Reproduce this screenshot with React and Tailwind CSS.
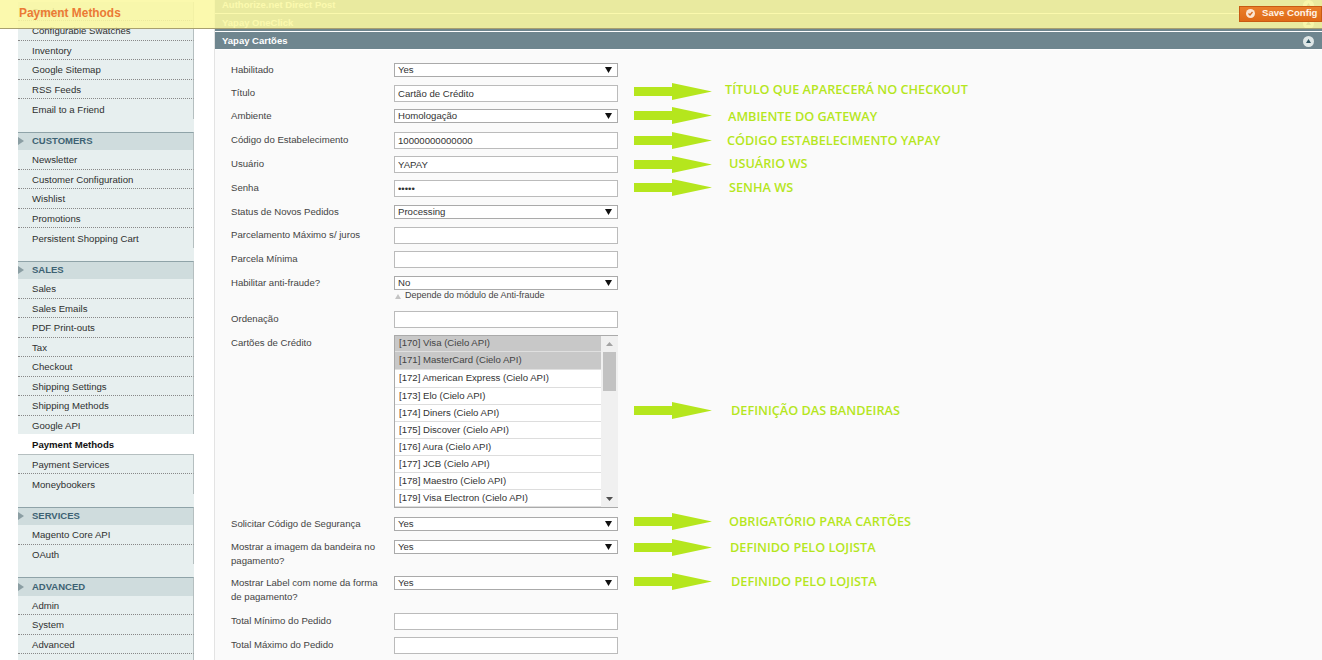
const groups = [
  { title: null, items: ['Catalog', 'Configurable Swatches', 'Inventory', 'Google Sitemap', 'RSS Feeds', 'Email to a Friend'] },
  { title: 'CUSTOMERS', items: ['Newsletter', 'Customer Configuration', 'Wishlist', 'Promotions', 'Persistent Shopping Cart'] },
  { title: 'SALES', items: ['Sales', 'Sales Emails', 'PDF Print-outs', 'Tax', 'Checkout', 'Shipping Settings', 'Shipping Methods', 'Google API', 'Payment Methods', 'Payment Services', 'Moneybookers'] },
  { title: 'SERVICES', items: ['Magento Core API', 'OAuth'] },
  { title: 'ADVANCED', items: ['Admin', 'System', 'Advanced', ''] },
]

const cards = [
  '[170] Visa (Cielo API)',
  '[171] MasterCard (Cielo API)',
  '[172] American Express (Cielo API)',
  '[173] Elo (Cielo API)',
  '[174] Diners (Cielo API)',
  '[175] Discover (Cielo API)',
  '[176] Aura (Cielo API)',
  '[177] JCB (Cielo API)',
  '[178] Maestro (Cielo API)',
  '[179] Visa Electron (Cielo API)',
]

function Arrow() {
  return (
    <svg width="78" height="17" viewBox="0 0 78 17" className="shrink-0">
      <polygon points="0,4 38,4 38,0 78,8.5 38,17 38,13 0,13" fill="#b5e61d" />
    </svg>
  )
}

// Lime arrow + caption painted on top of the screenshot, next to the field
function Note({ text, className, textClass }) {
  return (
    <div className={`ml-[16px] flex h-[24px] items-center ${className}`}>
      <Arrow />
      <span className={`whitespace-nowrap pt-[2px] font-['Open_Sans',sans-serif] text-[12.7px] font-semibold text-[#b5e61d] ${textClass}`}>
        {text}
      </span>
    </div>
  )
}

function SelectBox({ value }) {
  return (
    <div className="flex h-[24px] w-[224px] items-center">
      <div className="flex h-[14px] w-full items-center justify-between border border-[#aaaaaa] bg-white pl-[3px] pr-[5px] text-[#333]">
        <span>{value}</span>
        <svg width="7" height="6" viewBox="0 0 7 6"><polygon points="0,0 7,0 3.5,6" fill="#111" /></svg>
      </div>
    </div>
  )
}

function TextBox({ value = '', type = 'text' }) {
  return (
    <div className="flex h-[24px] w-[224px] items-center">
      <input
        readOnly
        type={type}
        value={value}
        className="h-[17px] w-full border border-[#bbbbbb] bg-white px-[3px] text-[9.6px] text-[#333] outline-none"
      />
    </div>
  )
}

function Row({ label, className, children, note }) {
  return (
    <div className={`flex items-start ${className}`}>
      <div className="w-[163px] shrink-0 pt-[5px] pr-[8px] leading-[14px] text-[#444]">{label}</div>
      <div className="w-[224px] shrink-0">{children}</div>
      {note}
    </div>
  )
}

function Sidebar() {
  return (
    <aside className="w-[214px] shrink-0 pl-[18px] pr-[20px] pt-[1.5px]">
      <div className="bg-[#e7efef]">
        {groups.map((group, g) => (
          <div key={g} className={g === 4 ? '' : 'pb-[13px]'}>
            {group.title && (
              <div className="flex h-[18.5px] items-center border-t border-[#8fa3a8] border-r border-r-[#b5bfc0] bg-[#cfdcdd]">
                <svg width="6" height="8" viewBox="0 0 6 8" className="shrink-0"><polygon points="0,0 6,4 0,8" fill="#8b9ea3" /></svg>
                <span className="ml-[8px] text-[9.5px] font-bold text-[#3d6273]">{group.title}</span>
              </div>
            )}
            {group.items.map((item, i) => {
              const active = item === 'Payment Methods'
              const last = i === group.items.length - 1
              if (active) {
                return (
                  <div key={item} className="-mt-px flex h-[20.5px] items-center border-b border-[#b5bfc0] bg-white pl-[14px] pt-[2px] font-bold text-[#111]">
                    {item}
                  </div>
                )
              }
              return (
                <div
                  key={i}
                  className={`flex h-[19.5px] items-center border-r border-r-[#b5bfc0] pl-[14px] pt-[2px] text-[#2f2f2f] ${last ? '' : 'border-b border-b-[#888] [border-bottom-style:dotted]'}`}
                >
                  {item}
                </div>
              )
            })}
          </div>
        ))}
      </div>
    </aside>
  )
}

function SectionBar({ title, className }) {
  return (
    <div className={`flex h-[18px] items-center justify-between border-b border-white bg-[#6f868f] pl-[7px] pr-[8px] pt-[1px] text-[9.5px] font-bold text-white ${className}`}>
      <span>{title}</span>
      <span className="flex h-[11px] w-[11px] items-center justify-center rounded-full bg-[#dfe7e7]">
        <svg width="5" height="4" viewBox="0 0 5 4"><polygon points="2.5,0 5,4 0,4" fill="#2f5563" /></svg>
      </span>
    </div>
  )
}

function CardList() {
  return (
    <div className="mt-[4px] flex h-[173px] w-[224px] overflow-hidden border-b border-l border-t border-[#aaaaaa] bg-white">
      <div className="w-[206px] shrink-0">
        {cards.map((card, i) => (
          <div
            key={card}
            className={`flex items-center border-b pl-[4px] ${i === 0 ? 'h-[16px]' : i < 3 ? 'h-[18px]' : 'h-[17px]'} ${i < 2 ? 'border-[#e0e0e0] bg-[#c8c8c8] text-[#444]' : 'border-[#dddddd] text-[#333]'}`}
          >
            {card}
          </div>
        ))}
      </div>
      <div className="flex w-[17px] flex-col items-center bg-[#f0f0f0]">
        <svg width="7" height="4" viewBox="0 0 7 4" className="mt-[6px]"><polygon points="3.5,0 7,4 0,4" fill="#a3a3a3" /></svg>
        <div className="mt-[6px] h-[39px] w-[13px] bg-[#c2c2c2]" />
        <svg width="7" height="4" viewBox="0 0 7 4" className="mt-auto mb-[6px]"><polygon points="0,0 7,0 3.5,4" fill="#505050" /></svg>
      </div>
    </div>
  )
}

function ConfigForm() {
  return (
    <div className="pl-[16px] pt-[8px]">
      <Row label="Habilitado" className="h-[23px]"><SelectBox value="Yes" /></Row>
      <Row
        label="Título"
        className="h-[23px]"
        note={<Note text="TÍTULO QUE APARECERÁ NO CHECKOUT" className="-mt-[2px]" textClass="ml-[13px] -mt-[4px]" />}
      >
        <TextBox value="Cartão de Crédito" />
      </Row>
      <Row
        label="Ambiente"
        className="h-[24px]"
        note={<Note text="AMBIENTE DO GATEWAY" className="-mt-[1px]" textClass="ml-[16px] mt-[2px]" />}
      >
        <SelectBox value="Homologação" />
      </Row>
      <Row
        label="Código do Estabelecimento"
        className="h-[24px]"
        note={<Note text="CÓDIGO ESTABELECIMENTO YAPAY" className="-ml-[1px]" textClass="ml-[15px]" />}
      >
        <TextBox value="10000000000000" />
      </Row>
      <Row
        label="Usuário"
        className="h-[24px]"
        note={<Note text="USUÁRIO WS" className="-ml-[1px]" textClass="ml-[17px] -mt-[2px]" />}
      >
        <TextBox value="YAPAY" />
      </Row>
      <Row
        label="Senha"
        className="h-[24px]"
        note={<Note text="SENHA WS" className="-ml-[1px] -mt-[1px]" textClass="ml-[17px]" />}
      >
        <TextBox value="YAPAY" type="password" />
      </Row>
      <Row label="Status de Novos Pedidos" className="h-[23px]"><SelectBox value="Processing" /></Row>
      <Row label="Parcelamento Máximo s/ juros" className="h-[24px]"><TextBox /></Row>
      <Row label="Parcela Mínima" className="h-[24px]"><TextBox /></Row>
      <Row label="Habilitar anti-fraude?" className="h-[36px]">
        <SelectBox value="No" />
        <div className="-mt-[6px] flex h-[14px] items-center text-[9px] text-[#444]">
          <svg width="6" height="5" viewBox="0 0 6 5" className="ml-[1px] mr-[4px]"><polygon points="3,0 6,5 0,5" fill="#c4c4c4" /></svg>
          Depende do módulo de Anti-fraude
        </div>
      </Row>
      <Row label="Ordenação" className="h-[24px]"><TextBox /></Row>
      <Row
        label="Cartões de Crédito"
        className="h-[181px]"
        note={<Note text="DEFINIÇÃO DAS BANDEIRAS" className="mt-[67px]" textClass="ml-[19px]" />}
      >
        <CardList />
      </Row>
      <Row
        label="Solicitar Código de Segurança"
        className="h-[23px]"
        note={<Note text="OBRIGATÓRIO PARA CARTÕES" className="-mt-[3px]" textClass="ml-[17px]" />}
      >
        <SelectBox value="Yes" />
      </Row>
      <Row
        label="Mostrar a imagem da bandeira no pagamento?"
        className="h-[36px]"
        note={<Note text="DEFINIDO PELO LOJISTA" textClass="ml-[18px]" />}
      >
        <SelectBox value="Yes" />
      </Row>
      <Row
        label="Mostrar Label com nome da forma de pagamento?"
        className="h-[38px]"
        note={<Note text="DEFINIDO PELO LOJISTA" className="-mt-[2px]" textClass="ml-[19px]" />}
      >
        <SelectBox value="Yes" />
      </Row>
      <Row label="Total Mínimo do Pedido" className="h-[24px]"><TextBox /></Row>
      <Row label="Total Máximo do Pedido" className="h-[24px]"><TextBox /></Row>
    </div>
  )
}

export default function App() {
  return (
    <div className="relative flex h-screen overflow-hidden bg-white font-['Liberation_Sans',Arial,sans-serif] text-[9.6px]">
      <Sidebar />

      <main className="min-w-0 flex-1 border-l border-[#e3e3e3] bg-[#fafafa]">
        <SectionBar title="Authorize.net Direct Post" className="-mt-[4px]" />
        <SectionBar title="Yapay OneClick" />
        <SectionBar title="Yapay Cartões" />
        <ConfigForm />
      </main>

      {/* Sticky page header, translucent over the content */}
      <div className="absolute inset-x-0 top-0 flex h-[29px] items-center justify-between border-b border-[#a8a070] bg-[#faf8a1]/[.875] pl-[19px]">
        <span className="text-[11.9px] font-bold text-[#eb7a35]">Payment Methods</span>
        <button className="mb-[1px] flex h-[16px] w-[83px] items-center whitespace-nowrap border border-[#c85a12] bg-linear-to-b from-[#ea7f2a] to-[#df6a16] pl-[6px] text-[9.6px] font-bold text-[#fff3e6]">
          <span className="mr-[7px] flex h-[9px] w-[9px] shrink-0 items-center justify-center rounded-full bg-[#fbe6d3]">
            <svg width="7" height="7" viewBox="0 0 7 7"><path d="M1.5 3.5 L3 5 L5.5 2" fill="none" stroke="#d9661a" strokeWidth="1.3" /></svg>
          </span>
          Save Config
        </button>
      </div>
    </div>
  )
}
